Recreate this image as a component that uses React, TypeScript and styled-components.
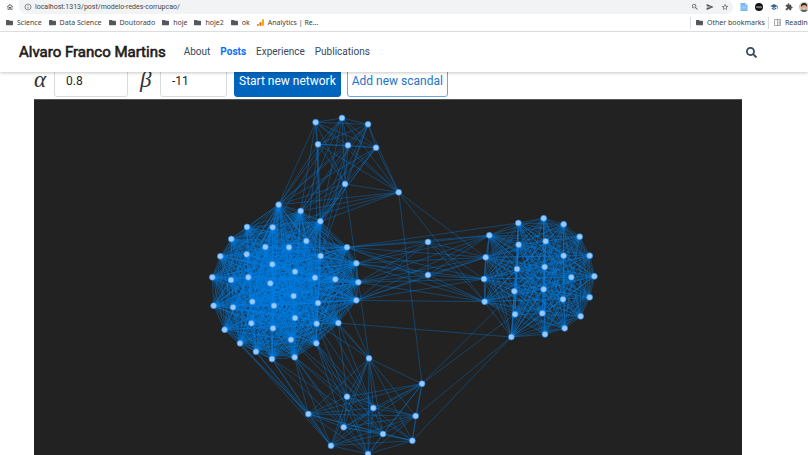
import React from "react";
import styled, { createGlobalStyle } from "styled-components";
import { FaFolder, FaSearch } from "react-icons/fa";
import {
  MdExtension,
  MdInfoOutline,
  MdOutlineHome,
  MdSchool,
  MdSend,
  MdStarBorder,
  MdZoomOut,
} from "react-icons/md";

const GlobalStyle = createGlobalStyle`
  * { box-sizing: border-box; }
  body { margin: 0; background: #fff; font-family: Roboto, sans-serif; }
  button, input { font-family: inherit; }
`;

const Page = styled.div`
  display: flex;
  flex-direction: column;
  height: 100vh;
  min-width: 0;
  overflow: hidden;
`;

const AddressRow = styled.div`
  display: flex;
  align-items: center;
  flex: none;
  height: 14px;
  background: #fff;
`;

const IconButton = styled.button`
  display: flex;
  align-items: center;
  justify-content: center;
  flex: none;
  width: 15px;
  padding: 0;
  border: 0;
  background: none;
  color: ${(p) => p.color || "#4d5156"};
  font-size: 8px;
`;

const HomeButton = styled(IconButton)`
  width: 19px;
`;

const AddressBar = styled.div`
  display: flex;
  align-items: center;
  flex: 1;
  min-width: 0;
  height: 14px;
  padding: 0 1px 0 5px;
  border-radius: 0 7px 7px 7px;
  background: #f1f3f4;
  color: #4d5156;
  font-size: 8px;
`;

const AddressInput = styled.input`
  flex: 1;
  min-width: 0;
  margin-left: 3px;
  padding: 0;
  border: 0;
  outline: 0;
  background: transparent;
  color: #43474b;
  font-size: 7px;
  line-height: 12px;
`;

const Extensions = styled.div`
  display: flex;
  flex: none;
  align-items: center;
  width: 75px;
  padding-left: 3px;
`;

const Bookmarks = styled.nav`
  display: flex;
  align-items: center;
  flex: none;
  gap: 7px;
  height: 18px;
  padding-left: 6px;
  border-bottom: 1px solid #e4e6e8;
  overflow: hidden;
  font-family: "Noto Sans", sans-serif;
`;

const Bookmark = styled.a`
  display: flex;
  align-items: center;
  flex: none;
  gap: 4px;
  color: #3c4043;
  font-size: 7px;
  line-height: 12px;
  text-decoration: none;
  white-space: nowrap;
`;

const OtherBookmarks = styled.div`
  display: flex;
  flex: none;
  gap: 3px;
  width: 118px;
  margin-left: auto;
`;

const Divided = styled(Bookmark)`
  padding-left: 5px;
  border-left: 1px solid #dadce0;
`;

const FolderIcon = styled(FaFolder)`
  width: 7px;
  height: 7px;
  color: #54585d;
`;

const Header = styled.header`
  display: flex;
  align-items: center;
  flex: none;
  z-index: 1;
  height: 40px;
  padding: 0 51px 0 19px;
  background: #fff;
  box-shadow: 0 1px 3px rgba(0, 0, 0, 0.22);
`;

const Brand = styled.a`
  margin-right: 18px;
  color: #1b1b1b;
  font-size: 15px;
  font-weight: 400;
  line-height: 20px;
  text-decoration: none;
  white-space: nowrap;
  -webkit-text-stroke: 0.6px #1b1b1b;
`;

const Menu = styled.nav`
  display: flex;
  flex: 1;
  gap: 10px;
`;

const MenuLink = styled.a<{ $active?: boolean }>`
  color: ${(p) => (p.$active ? "#0a6cff" : "#34495e")};
  font-size: 10px;
  font-weight: ${(p) => (p.$active ? 700 : 400)};
  line-height: 16px;
  text-decoration: none;
`;

const SearchButton = styled(IconButton)`
  width: 12px;
  color: #34495e;
  font-size: 11px;
`;

const Main = styled.main`
  display: flex;
  flex: 1;
  flex-direction: column;
  min-height: 0;
  padding: 0 66px 0 34px;
`;

const Controls = styled.form`
  display: flex;
  align-items: flex-end;
  flex: none;
  height: 27px;
  padding-bottom: 2px;
`;

const Greek = styled.label`
  flex: none;
  width: 20px;
  color: #333;
  font-family: "Liberation Serif", serif;
  font-size: 23px;
  font-style: italic;
  line-height: 35px;
`;

const NumberInput = styled.input<{ $width: number }>`
  width: ${(p) => p.$width}px;
  height: 33px;
  margin-right: ${(p) => (p.$width > 70 ? 12 : 7)}px;
  padding: 0 11px;
  border: 1px solid #d8dadd;
  border-radius: 3px;
  background: #fff;
  color: #212529;
  font-size: 12px;
`;

const ActionButton = styled.button<{ $primary?: boolean }>`
  height: 33px;
  margin-right: 6px;
  padding: 0 4px;
  border: 1px solid ${(p) => (p.$primary ? "#0065bd" : "#6da6da")};
  border-radius: 3px;
  background: ${(p) => (p.$primary ? "#0065bd" : "#fff")};
  color: ${(p) => (p.$primary ? "#fff" : "#1b75c4")};
  font-size: 12px;
  white-space: nowrap;
`;

const Canvas = styled.div`
  display: flex;
  flex: 1;
  min-height: 0;
  border-top: 1px solid #555;
  background: #222;
`;

const Graph = styled.svg`
  width: 100%;
  height: 100%;
`;

type Point = [number, number];

const place = (dx: number, dy: number, points: Point[]): Point[] =>
  points.map(([x, y]) => [x + dx, y + dy]);

const clusters: Record<string, Point[]> = {
  B: place(600, 570, [
    [236, 44], [302, 63], [361, 94], [141, 111], [218, 112], [94, 147], [196, 171],
    [267, 172], [319, 153], [441, 172], [61, 199], [140, 193], [362, 198], [217, 223],
    [285, 245], [469, 220], [37, 262], [93, 270], [145, 262], [345, 263], [406, 268],
    [211, 280], [475, 277], [281, 318], [469, 331], [157, 335], [41, 347], [99, 352],
    [222, 347], [354, 339], [285, 384], [154, 400], [350, 401], [415, 399], [74, 419],
    [219, 415], [120, 460], [273, 449], [349, 460], [168, 485], [216, 507], [284, 502],
  ]),
  R: place(1230, 615, [
    [238, 91], [325, 54], [401, 40], [461, 58], [509, 95], [539, 152], [553, 214],
    [539, 277], [512, 334], [464, 370], [405, 388], [304, 396], [224, 290], [222, 222],
    [227, 157], [326, 119], [407, 109], [461, 152], [321, 192], [404, 186], [484, 217],
    [313, 259], [401, 253], [459, 283], [315, 328], [397, 325],
  ]),
  T: place(810, 315, [
    [137, 52], [216, 39], [294, 58], [144, 118], [234, 121], [318, 128], [225, 237],
    [386, 262],
  ]),
  L: place(870, 960, [
    [237, 115], [396, 191], [171, 230], [250, 264], [55, 282], [377, 288], [161, 322],
    [279, 342], [367, 362], [123, 377], [234, 402],
  ]),
  M: place(1230, 615, [[54, 111], [54, 210]]),
};

// Links between clusters: a source node followed by all of its targets.
const bridges = [
  "T0 B0 B1 B2", "T1 B0 B1 B2 B4", "T2 B0 B1 B2 B12", "T3 B0 B2 B8 B19",
  "T4 B0 B1 B2 B12", "T5 B0 B1 B2 B8", "T6 B0 B1 B2 B7 B8 B14 L0",
  "T7 B0 B1 B2 B4 R14 R12 L1",
  "B9 R0 R1 R14 R13 R12 M0 M1", "B15 R0 R14 R13 R12 M0 M1",
  "B22 R0 R14 R13 R12 M0 M1", "B24 R0 R14 R13 R12 M0 M1",
  "M0 R0 R14 R13 R12", "M1 R0 R14 R13 R12",
  "B33 L0 L2 L3 R11", "B32 L0 L3 L2", "B29 L0 L3", "B20 L0", "B38 L2 L3 L7 L6 L10",
  "B41 L2 L4 L6 L9 L7 L10", "B40 L4 L6 L9 L7", "B39 L4 L9", "B36 L4 L9", "B34 L4",
  "B37 L2 L3", "L1 R21 R24", "L5 R11", "L8 R11",
];

const segment = ([x1, y1]: Point, [x2, y2]: Point) => ({ x1, y1, x2, y2 });
const nodeAt = (id: string) => clusters[id[0]][Number(id.slice(1))];

const links = [
  ...Object.values(clusters).flatMap((nodes) =>
    nodes.flatMap((a, i) => nodes.slice(i + 1).map((b) => segment(a, b)))
  ),
  ...bridges.flatMap((line) => {
    const [from, ...targets] = line.split(" ");
    return targets.map((to) => segment(nodeAt(from), nodeAt(to)));
  }),
];

const bookmarks = ["Science", "Data Science", "Doutorado", "hoje", "hoje2", "ok"];

export default function App() {
  return (
    <>
      <GlobalStyle />
      <Page>
        <AddressRow>
          <HomeButton aria-label="Home"><MdOutlineHome /></HomeButton>
          <AddressBar>
            <MdInfoOutline />
            <AddressInput
              aria-label="Address"
              defaultValue="localhost:1313/post/modelo-redes-corrupcao/"
            />
            <IconButton aria-label="Zoom"><MdZoomOut /></IconButton>
            <IconButton aria-label="Send"><MdSend /></IconButton>
            <IconButton aria-label="Bookmark this page"><MdStarBorder /></IconButton>
          </AddressBar>
          <Extensions>
            <IconButton aria-label="Notes">
              <svg width="8" height="8" viewBox="0 0 16 16">
                <path d="M1 0h10l4 4v12H1z" fill="#78b9f2" />
                <path d="M11 0v4h4" fill="#d5eaff" />
                <path d="M3 6h9M3 9h9M3 12h9" stroke="#c5e1fb" />
              </svg>
            </IconButton>
            <IconButton aria-label="Ad blocker">
              <svg width="8" height="8" viewBox="0 0 16 16">
                <circle cx="8" cy="8" r="8" fill="#111" />
                <path d="M3 10V7h2v3M7 7h2v3H7zM11 7h2v3h-2z" fill="none" stroke="#ccc" />
              </svg>
            </IconButton>
            <IconButton aria-label="Scholar" color="#38658c"><MdSchool /></IconButton>
            <IconButton aria-label="Extensions"><MdExtension /></IconButton>
            <IconButton aria-label="Profile">
              <svg width="10" height="10" viewBox="0 0 20 20">
                <circle cx="10" cy="10" r="10" fill="#c9c5bd" />
                <path d="M3 17q7-5 14 0-7 6-14 0z" fill="#526b60" />
                <ellipse cx="10" cy="10" rx="5" ry="6" fill="#e2a98a" />
                <path d="M4 10Q3 2 10 2t6 8q-2-4-5-4-5 0-7 4z" fill="#36251f" />
                <path d="M8 13q2 2 4 0" fill="none" stroke="#fff" />
              </svg>
            </IconButton>
          </Extensions>
        </AddressRow>

        <Bookmarks aria-label="Bookmarks">
          {bookmarks.map((name) => (
            <Bookmark href="#" key={name}><FolderIcon />{name}</Bookmark>
          ))}
          <Bookmark href="#">
            <svg width="7" height="7" viewBox="0 0 14 14">
              <circle cx="2" cy="12" r="2" fill="#e37400" />
              <rect x="5" y="6" width="4" height="8" rx="2" fill="#e8622c" />
              <rect x="10" y="0" width="4" height="14" rx="2" fill="#f9ab00" />
            </svg>
            Analytics | Re…
          </Bookmark>
          <OtherBookmarks>
            <Divided href="#"><FolderIcon />Other bookmarks</Divided>
            <Divided href="#">
              <svg width="7" height="7" viewBox="0 0 14 14" fill="none" stroke="#54585d">
                <path d="M1 1h12v12H1zM7 1v12M9 4h3M9 7h3M9 10h3" />
              </svg>
              Reading
            </Divided>
          </OtherBookmarks>
        </Bookmarks>

        <Header>
          <Brand href="#">Alvaro Franco Martins</Brand>
          <Menu aria-label="Main">
            <MenuLink href="#">About</MenuLink>
            <MenuLink href="#" $active>Posts</MenuLink>
            <MenuLink href="#">Experience</MenuLink>
            <MenuLink href="#">Publications</MenuLink>
          </Menu>
          <SearchButton aria-label="Search"><FaSearch /></SearchButton>
        </Header>

        <Main>
          <Controls>
            <Greek htmlFor="alpha">α</Greek>
            <NumberInput id="alpha" defaultValue="0.8" $width={74} />
            <Greek htmlFor="beta">β</Greek>
            <NumberInput id="beta" defaultValue="-11" $width={67} />
            <ActionButton type="button" $primary>Start new network</ActionButton>
            <ActionButton type="button">Add new scandal</ActionButton>
          </Controls>
          <Canvas>
            <Graph
              viewBox="102 300 2124 1065"
              preserveAspectRatio="xMidYMin meet"
              role="img"
              aria-label="Network graph"
            >
              <g stroke="#0080e6" strokeWidth="2" strokeOpacity="0.56">
                {links.map((link, i) => <line key={i} {...link} />)}
              </g>
              <g fill="#99c9ff" stroke="#1683e8" strokeWidth="2">
                {Object.values(clusters).flat().map(([x, y]) => (
                  <circle key={`${x}-${y}`} cx={x} cy={y} r="9" />
                ))}
              </g>
            </Graph>
          </Canvas>
        </Main>
      </Page>
    </>
  );
}
